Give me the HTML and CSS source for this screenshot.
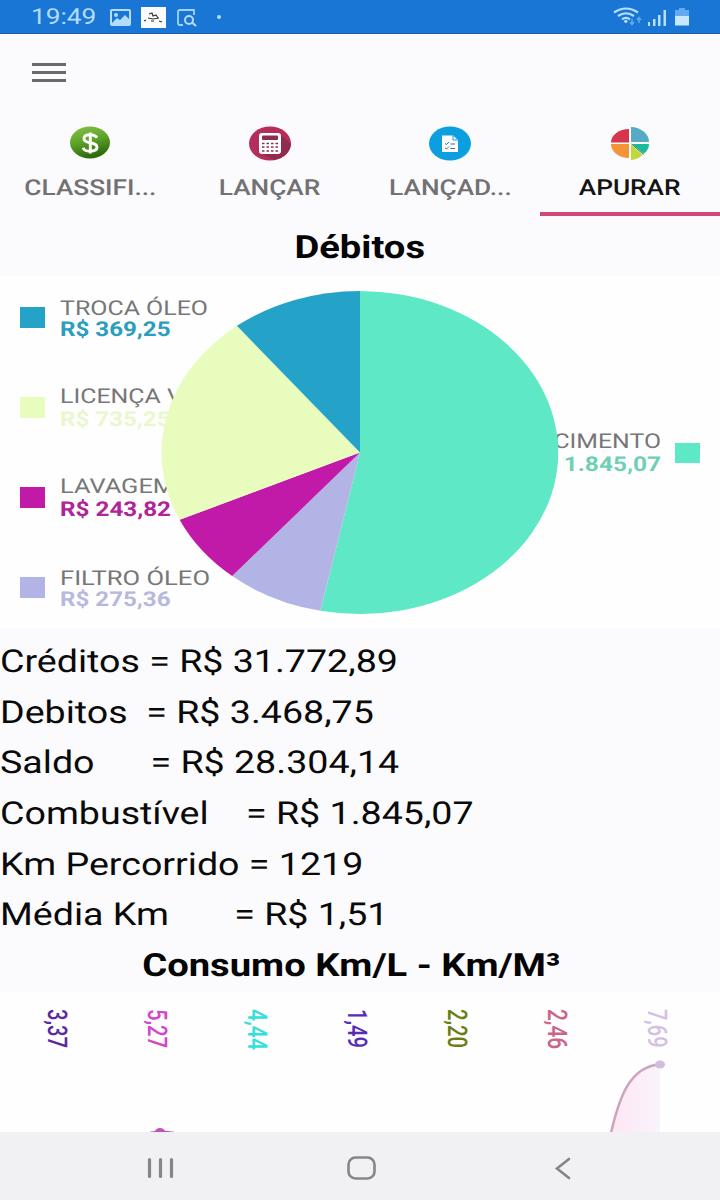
FILE: index.html
```html
<!DOCTYPE html>
<html lang="pt-BR">
<head>
    <meta charset="UTF-8">
    <meta name="viewport" content="width=device-width, initial-scale=1.0">
    <title>Apurar</title>
    <link rel="stylesheet" href="styles.css">
</head>
<body>

    <!-- Barra de status -->
    <header class="status-bar">
        <span class="clock"><span class="wide">19:49</span></span>
        <svg class="status-left" width="118" height="34" viewBox="0 0 118 34">
            <rect x="12" y="10" width="19" height="15" rx="1" fill="none" stroke="#b5dcff" stroke-width="2"/>
            <circle cx="17" cy="15" r="2" fill="#b5dcff"/>
            <path d="M13 23l5-5 3 2 5-5 5 5v5H13z" fill="#b5dcff"/>
            <rect x="42" y="7" width="25" height="21" fill="#fbfdfc"/>
            <path d="M50 14l3-1 1 3 3-1 2 3M49 18l5 1 6-1M45 21l2-1M52 21h3M60 21l3 1" fill="none" stroke="#333" stroke-width="1.2"/>
            <path d="M84 25h-3q-2 0-2-2V12q0-2 2-2h14v5" fill="none" stroke="#a0d2fa" stroke-width="1.8"/>
            <circle cx="90" cy="20" r="4" fill="none" stroke="#b5dcff" stroke-width="2"/>
            <path d="M93 22.500l4 3.500" stroke="#b5dcff" stroke-width="2.200"/>
        </svg>
        <span class="dot"></span>
        <svg class="status-right" width="80" height="34" viewBox="0 0 80 34">
            <g fill="none" stroke="#b8e0ff" stroke-width="2.200">
                <path d="M4 12.500q12-8 24 0"/>
                <path d="M8 16q8-5.500 16 0"/>
                <path d="M12 19.300q4-2.800 8 0"/>
            </g>
            <circle cx="15.800" cy="21.300" r="1.600" fill="#b8e0ff"/>
            <path d="M22 19v5M20 22l2 2.500 2-2.500M29 23v-5M27 20l2-2.500 2 2.500" fill="none" stroke="#62a9ee" stroke-width="1.500"/>
            <path d="M38 22h2v4h-2zM43 19h2.500v7H43zM48 15h2.500v11H48zM53.500 10H56v16h-2.500z" fill="#b8e0ff"/>
            <path d="M69 8h6v2h4v7H65v-7h4z" fill="#62a9ee"/>
            <path d="M65 16h14v9.500H65z" fill="#c8e8ff"/>
        </svg>
    </header>

    <div class="app-bar">
        <div class="menu-btn">
            <span></span>
            <span></span>
            <span></span>
        </div>
    </div>

    <!-- Abas -->
    <nav class="tabs">
        <div class="tab">
            <svg width="44" height="36" viewBox="0 0 44 36">
                <defs>
                    <linearGradient id="green" x1="0" y1="0" x2="0.300" y2="1">
                        <stop offset="0" stop-color="#88c14a"/>
                        <stop offset="0.500" stop-color="#5fa529"/>
                        <stop offset="1" stop-color="#2f6b0c"/>
                    </linearGradient>
                </defs>
                <ellipse cx="22" cy="17.500" rx="20" ry="16" fill="url(#green)"/>
                <path d="M29 12.800q-2-3-7-3-6 0-6 3.700 0 3.200 6 4.200 7 1 7 4.600 0 3.900-7 3.900-5.500 0-7-3.500M22.300 7.500v21" fill="none" stroke="#fff" stroke-width="2.900"/>
            </svg>
            <span class="wide tab-text">CLASSIFI...</span>
        </div>
        <div class="tab">
            <svg width="44" height="36" viewBox="0 0 44 36">
                <ellipse cx="22" cy="18.500" rx="21" ry="17" fill="#b52e5b"/>
                <path d="M33 10L43 19Q41 32 26 35L12 28z" fill="#922a4c"/>
                <rect x="11" y="8" width="22" height="21" rx="3" fill="#fff"/>
                <rect x="14" y="10.500" width="16" height="4.500" rx="1" fill="#8d2c4c"/>
                <path d="M14 18.500h16M14 22h16M14 26h16" stroke="#8d2c4c" stroke-width="1.600" stroke-dasharray="2.500 2"/>
            </svg>
            <span class="wide tab-text">LANÇAR</span>
        </div>
        <div class="tab">
            <svg width="44" height="36" viewBox="0 0 44 36">
                <ellipse cx="22" cy="18.500" rx="21" ry="17" fill="#0c9fe0"/>
                <path d="M14 10.500h11l5 4.500v12H14z" fill="#fff"/>
                <path d="M25 10.500v4.500h5" fill="none" stroke="#0c9fe0" stroke-width="1"/>
                <path d="M17 18.500l1.500 1 2.500-2.500M17 23l1.500 1 2.500-2.500M22.500 19H27M22.500 23.500H27" fill="none" stroke="#3b6f8c" stroke-width="1"/>
            </svg>
            <span class="wide tab-text">LANÇAD...</span>
        </div>
        <div class="tab active">
            <svg width="44" height="36" viewBox="0 0 44 36">
                <path d="M21 17.500V4A18 13.500 0 0 0 3 17.500z" fill="#d63649"/>
                <path d="M23 17V2A18 15 0 0 1 41 17z" fill="#55abc3"/>
                <path d="M21 19H3A18 14 0 0 0 21 33z" fill="#f49439"/>
                <path d="M24 19H41Q41 25 35.500 28.800z" fill="#1abc98"/>
                <path d="M23 19.500L34.500 30Q30 34.500 23 35z" fill="#bfd93a"/>
                <path d="M23.500 19L35.500 29.500" stroke="#2f4a3c" stroke-width="0.800"/>
            </svg>
            <span class="wide tab-text">APURAR</span>
        </div>
    </nav>

    <main>
        <h2 class="title"><span class="wide">Débitos</span></h2>

        <!-- Gráfico de pizza -->
        <svg class="pie-chart" width="720" height="352" viewBox="0 276 720 352">
            <g class="legend-name">
                <text x="60" y="315" textLength="148" lengthAdjust="spacingAndGlyphs">TROCA ÓLEO</text>
                <text x="60" y="402.500" textLength="206" lengthAdjust="spacingAndGlyphs">LICENÇA VEÍCULO</text>
                <text x="60" y="492.500" textLength="115" lengthAdjust="spacingAndGlyphs">LAVAGEM</text>
                <text x="60" y="585" textLength="150" lengthAdjust="spacingAndGlyphs">FILTRO ÓLEO</text>
                <text x="462" y="448" textLength="199" lengthAdjust="spacingAndGlyphs">ABASTECIMENTO</text>
            </g>
            <g class="legend-value">
                <text x="60" y="336" textLength="110.500" lengthAdjust="spacingAndGlyphs" fill="#2b9dbd">R$ 369,25</text>
                <text x="60" y="426" textLength="110.500" lengthAdjust="spacingAndGlyphs" fill="#eaf7cd">R$ 735,25</text>
                <text x="60" y="516" textLength="111" lengthAdjust="spacingAndGlyphs" fill="#b02497">R$ 243,82</text>
                <text x="60" y="606" textLength="110.500" lengthAdjust="spacingAndGlyphs" fill="#b7b8e0">R$ 275,36</text>
                <text x="528" y="471" textLength="133" lengthAdjust="spacingAndGlyphs" fill="#6fd0b6">R$ 1.845,07</text>
            </g>
            <rect x="20" y="307" width="25" height="21" fill="#24a2c7"/>
            <rect x="20" y="397" width="25" height="21" fill="#e8fcbd"/>
            <rect x="20" y="487" width="25" height="21" fill="#c21aa8"/>
            <rect x="20" y="577" width="25" height="21" fill="#b3b4e6"/>
            <rect x="675" y="443" width="25" height="20" fill="#5ee8c6"/>

            <path d="M360 452.500L360 291A198.500 161.500 0 1 1 320.400 610.800z" fill="#5ee8c6"/>
            <path d="M360 452.500L320.400 610.800A198.500 161.500 0 0 1 232.200 576.100z" fill="#b3b4e6"/>
            <path d="M360 452.500L232.200 576.100A198.500 161.500 0 0 1 179.600 519.800z" fill="#c21aa8"/>
            <path d="M360 452.500L179.600 519.800A198.500 161.500 0 0 1 236.900 325.800z" fill="#e8fcbd"/>
            <path d="M360 452.500L236.900 325.800A198.500 161.500 0 0 1 360 291z" fill="#24a2c7"/>
        </svg>

        <!-- Resumo -->
        <div class="summary">
            <p><span class="wide">Créditos = R$ 31.772,89</span></p>
            <p><span class="wide">Debitos  = R$ 3.468,75</span></p>
            <p><span class="wide">Saldo      = R$ 28.304,14</span></p>
            <p><span class="wide">Combustível    = R$ 1.845,07</span></p>
            <p><span class="wide">Km Percorrido = 1219</span></p>
            <p><span class="wide">Média Km       = R$ 1,51</span></p>
        </div>

        <h2 class="title consumo"><span class="wide">Consumo Km/L - Km/M³</span></h2>

        <!-- Gráfico de consumo -->
        <svg class="line-chart" width="720" height="140" viewBox="0 992 720 140">
            <defs>
                <linearGradient id="area" x1="0" y1="0" x2="1" y2="0">
                    <stop offset="0" stop-color="#fde6f5"/>
                    <stop offset="1" stop-color="#f9f4fb"/>
                </linearGradient>
            </defs>
            <g class="values">
                <text transform="translate(47.500 1009) rotate(90)" textLength="39" lengthAdjust="spacingAndGlyphs" fill="#5b2a9d">3,37</text>
                <text transform="translate(147.500 1009) rotate(90)" textLength="39" lengthAdjust="spacingAndGlyphs" fill="#d347c9">5,27</text>
                <text transform="translate(247.500 1009) rotate(90)" textLength="41" lengthAdjust="spacingAndGlyphs" fill="#35e0dc">4,44</text>
                <text transform="translate(347.500 1009) rotate(90)" textLength="39" lengthAdjust="spacingAndGlyphs" fill="#5a2bb5">1,49</text>
                <text transform="translate(447.500 1009) rotate(90)" textLength="39" lengthAdjust="spacingAndGlyphs" fill="#6a7f13">2,20</text>
                <text transform="translate(547.500 1009) rotate(90)" textLength="40" lengthAdjust="spacingAndGlyphs" fill="#cc6389">2,46</text>
                <text transform="translate(647.500 1009) rotate(90)" textLength="38.500" lengthAdjust="spacingAndGlyphs" fill="#d3c0e2">7,69</text>
            </g>
            <path d="M611 1133Q626 1066 660 1065V1133z" fill="url(#area)"/>
            <path d="M611 1133C619 1098 630 1066 660 1064.500" fill="none" stroke="#cda3bd" stroke-width="2.500"/>
            <ellipse cx="660" cy="1064.500" rx="5" ry="4" fill="#d1bddd"/>
            <path d="M150 1132.500q10-2 24 0" fill="none" stroke="#b04fb0" stroke-width="1.500"/>
            <ellipse cx="160" cy="1132" rx="5" ry="4" fill="#c14fbc"/>
        </svg>
    </main>

    <!-- Botões do sistema -->
    <footer class="nav-bar">
        <svg width="720" height="68" viewBox="0 0 720 68">
            <g fill="none" stroke="#868686" stroke-linecap="round">
                <path d="M149.500 27.500v17M160.500 27.500v17M171.500 27.500v17" stroke-width="3.200"/>
                <rect x="348.500" y="25.500" width="26" height="21" rx="7" stroke-width="2.600"/>
                <path d="M569 27L557 36.500L569 46" stroke-width="2.600"/>
            </g>
        </svg>
    </footer>

</body>
</html>
```

FILE: styles.css
```css
* {
    box-sizing: border-box;
    margin: 0;
    padding: 0;
}

body {
    width: 720px;
    height: 1200px;
    font-family: Roboto, "Liberation Sans", sans-serif;
    text-rendering: geometricPrecision;
    background-color: #fbfafc;
    overflow: hidden;
}

svg {
    display: block;
}

/* Texto alargado na horizontal */
.wide {
    display: inline-block;
    white-space: pre;
    transform: scaleX(1.193);
    transform-origin: left center;
}

.status-bar {
    display: flex;
    align-items: center;
    height: 34px;
    padding-left: 31px;
    background-color: #1976d5;
    border-bottom: 1px solid #165da8;
}

.clock {
    width: 68px;
    padding-top: 2px;
    color: #b5dcff;
    font-size: 22px;
}

.dot {
    width: 4px;
    height: 4px;
    border-radius: 50%;
    background-color: #b5dcff;
}

.status-right {
    margin-left: auto;
    margin-right: 30px;
}

.app-bar {
    height: 82px;
    padding: 29px 32px;
}

.menu-btn {
    display: flex;
    flex-direction: column;
    gap: 5px;
    width: 34px;
}

.menu-btn span {
    height: 3px;
    background-color: #6c6b6c;
}

.tabs {
    display: grid;
    grid-template-columns: repeat(4, 1fr);
    height: 100px;
}

.tab {
    display: flex;
    flex-direction: column;
    align-items: center;
    padding-top: 9px;
    border-bottom: 4px solid transparent;
    color: #727173;
}

.tab.active {
    color: #141414;
    border-bottom-color: #cf4a75;
}

.tab-text {
    margin-top: 15px;
    font-size: 22px;
    font-weight: 500;
    line-height: 25px;
    transform-origin: center;
}

.title {
    height: 60px;
    line-height: 62px;
    text-align: center;
    font-size: 32px;
    font-weight: 700;
    color: #050505;
}

.title .wide {
    transform-origin: center;
}

.pie-chart,
.line-chart {
    background-color: #fefefe;
}

.legend-name {
    font-size: 20.5px;
    fill: #777;
}

.legend-value {
    font-size: 20.5px;
    font-weight: 700;
}

.summary {
    padding-top: 8px;
    font-size: 31.5px;
    color: #0a0a0a;
}

.summary p {
    height: 50.7px;
    line-height: 51.7px;
}

.consumo {
    height: 51.8px;
    line-height: 50px;
    padding-right: 18px;
}

.values {
    font-size: 27px;
    font-weight: 500;
}

.nav-bar {
    height: 68px;
    background-color: #f1f0f2;
}
```
